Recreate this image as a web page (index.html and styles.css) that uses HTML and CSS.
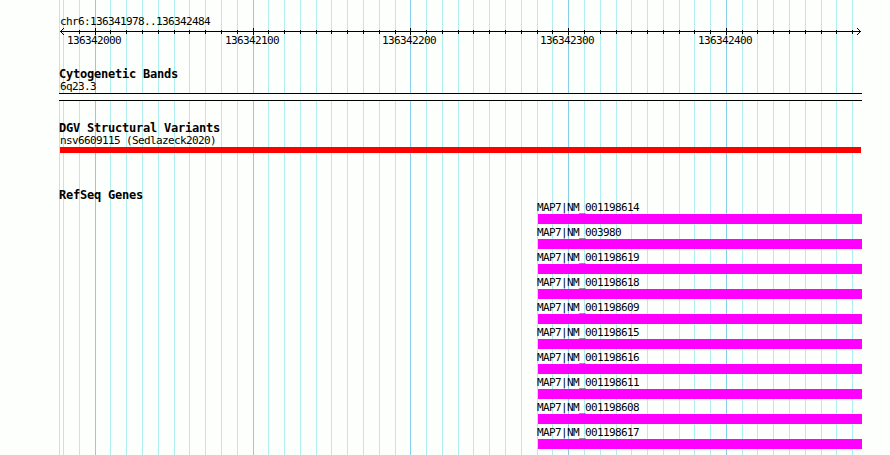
FILE: index.html
```
<!DOCTYPE html>
<html lang="en">
<head>
  <meta charset="UTF-8">
  <title>chr6:136341978..136342484</title>
  <link rel="stylesheet" href="styles.css">
</head>
<body>
  <div class="browser">
    <svg class="grid" width="890" height="455" shape-rendering="crispEdges">
      <path class="minor" d="M59.5 0v455M63.5 0v455M79.5 0v455M110.5 0v455M126.5 0v455M142.5 0v455M158.5 0v455M174.5 0v455M189.5 0v455M205.5 0v455M221.5 0v455M237.5 0v455M268.5 0v455M284.5 0v455M300.5 0v455M316.5 0v455M331.5 0v455M347.5 0v455M363.5 0v455M379.5 0v455M395.5 0v455M426.5 0v455M442.5 0v455M458.5 0v455M473.5 0v455M489.5 0v455M505.5 0v455M521.5 0v455M537.5 0v455M552.5 0v455M584.5 0v455M600.5 0v455M616.5 0v455M631.5 0v455M647.5 0v455M663.5 0v455M679.5 0v455M694.5 0v455M710.5 0v455M742.5 0v455M757.5 0v455M773.5 0v455M789.5 0v455M805.5 0v455M821.5 0v455M836.5 0v455M852.5 0v455"/>
      <path class="major" d="M95.5 0v455M253.5 0v455M410.5 0v455M568.5 0v455M726.5 0v455"/>
    </svg>

    <div class="region label">chr6:136341978..136342484</div>
    <svg class="ruler" width="803" height="20" viewBox="59 28 803 20">
      <g shape-rendering="crispEdges">
        <path class="axis" d="M60 31.5H861"/>
        <path class="axis" d="M79.5 30v4M110.5 30v4M126.5 30v4M142.5 30v4M158.5 30v4M174.5 30v4M189.5 30v4M205.5 30v4M221.5 30v4M237.5 30v4M268.5 30v4M284.5 30v4M300.5 30v4M316.5 30v4M331.5 30v4M347.5 30v4M363.5 30v4M379.5 30v4M395.5 30v4M426.5 30v4M442.5 30v4M458.5 30v4M473.5 30v4M489.5 30v4M505.5 30v4M521.5 30v4M537.5 30v4M552.5 30v4M584.5 30v4M600.5 30v4M616.5 30v4M631.5 30v4M647.5 30v4M663.5 30v4M679.5 30v4M694.5 30v4M710.5 30v4M742.5 30v4M757.5 30v4M773.5 30v4M789.5 30v4M805.5 30v4M821.5 30v4M836.5 30v4M852.5 30v4"/>
        <path class="axis" d="M95.5 28v7M253.5 28v7M410.5 28v7M568.5 28v7M726.5 28v7"/>
        <path d="M61 30h1v3h-1zM62 29h1v1h-1zM62 33h1v1h-1zM63 28h1v1h-1zM63 34h1v1h-1z"/>
        <path d="M859 30h1v3h-1zM858 29h1v1h-1zM858 33h1v1h-1zM857 28h1v1h-1zM857 34h1v1h-1z"/>
      </g>
      <text class="label" x="67" y="44">136342000</text>
      <text class="label" x="225" y="44">136342100</text>
      <text class="label" x="382" y="44">136342200</text>
      <text class="label" x="540" y="44">136342300</text>
      <text class="label" x="698" y="44">136342400</text>
    </svg>

    <h2 class="bands-title">Cytogenetic Bands</h2>
    <div class="label feature-name">6q23.3</div>
    <div class="band"></div>

    <h2 class="variants-title">DGV Structural Variants</h2>
    <div class="label feature-name">nsv6609115 (Sedlazeck2020)</div>
    <div class="variant"></div>

    <h2 class="genes-title">RefSeq Genes</h2>
    <div class="genes">
      <div class="gene label">MAP7|NM_001198614</div>
      <div class="gene label">MAP7|NM_003980</div>
      <div class="gene label">MAP7|NM_001198619</div>
      <div class="gene label">MAP7|NM_001198618</div>
      <div class="gene label">MAP7|NM_001198609</div>
      <div class="gene label">MAP7|NM_001198615</div>
      <div class="gene label">MAP7|NM_001198616</div>
      <div class="gene label">MAP7|NM_001198611</div>
      <div class="gene label">MAP7|NM_001198608</div>
      <div class="gene label">MAP7|NM_001198617</div>
    </div>
  </div>
</body>
</html>
```
FILE: styles.css
```
body {
  margin: 0;
  background: #fdfffc;
  color: #000;
}
.browser {
  position: relative;
  isolation: isolate;
  box-sizing: border-box;
  width: 890px;
  height: 455px;
  padding: 16px 28px 0 59px;
  overflow: hidden;
}
/* guide lines run behind every track */
.grid {
  position: absolute;
  top: 0;
  left: 0;
  z-index: -1;
}
.minor {
  stroke: #afeeee;
}
.major {
  stroke: #87ceeb;
}
.axis {
  stroke: #000;
}
.label {
  font-family: "DejaVu Sans Mono", monospace;
  font-size: 11px;
  letter-spacing: -0.62px;
  line-height: 12px;
  white-space: pre;
}
.region,
.feature-name {
  padding-left: 1px;
}
.ruler {
  display: block;
}
h2 {
  margin: 0;
  font: bold 12px/12px "DejaVu Sans Mono", monospace;
  letter-spacing: -0.225px;
}
.bands-title {
  margin-top: 20px;
}
.feature-name {
  padding-top: 1px;
}
.band {
  box-sizing: border-box;
  height: 8px;
  background: #fdfffc;
  border: solid #000;
  border-width: 1px 0;
}
.variants-title {
  margin-top: 21px;
}
.variant {
  height: 6px;
  margin: 0 1px;
  background: #f00;
}
.genes-title {
  margin-top: 36px;
}
.genes {
  margin-left: 478px;
}
.gene {
  height: 12px;
  padding-top: 1px;
  border-bottom: 10px solid #f0f;
  margin-bottom: 2px;
  margin-left: 1px;
  text-indent: -1px;
}
```
